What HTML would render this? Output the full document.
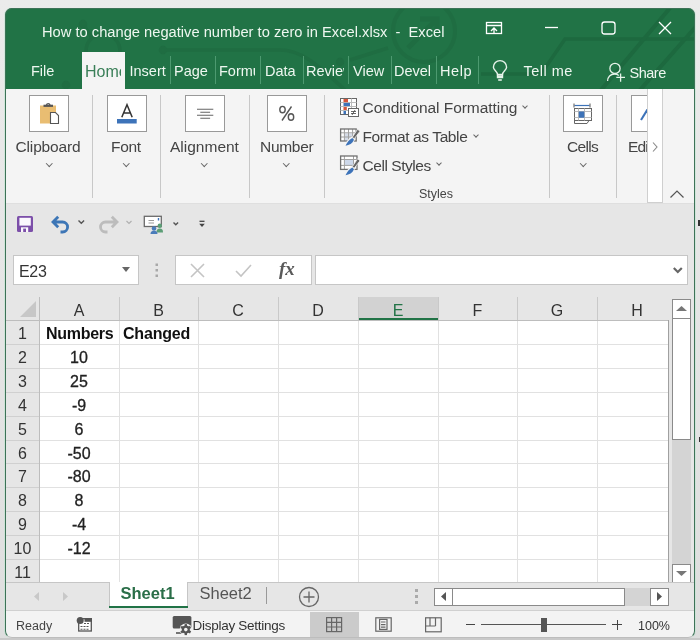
<!DOCTYPE html>
<html><head><meta charset="utf-8">
<style>
*{margin:0;padding:0;box-sizing:border-box}
html,body{width:700px;height:640px;overflow:hidden;background:linear-gradient(#ebebeb,#dedede);font-family:"Liberation Sans",sans-serif}
.a{position:absolute}
#win{will-change:transform;position:absolute;left:0;top:0;width:700px;height:640px;clip-path:inset(8px 5px 2px 5px round 7px);background:#e6e6e6}
#frame{position:absolute;left:5px;top:8px;width:690px;height:630px;border-radius:7px;border:1px solid #3d7257;border-bottom-color:#bdbdbd;box-shadow:-1px 0 0 0 rgba(190,230,208,.55),1px 0 0 0 rgba(190,230,208,.55);z-index:50}
.t{position:absolute;white-space:pre;line-height:1}
.tab{color:#eef7f0;font-size:14.5px}
.sep{position:absolute;width:1px;background:#4d9a70;top:56px;height:28px}
.rsep{position:absolute;width:1px;background:#c8c8c8;top:95px;height:103px}
.box{position:absolute;top:95px;width:40px;height:37px;background:#fff;border:1px solid #999}
.lbl{color:#444;font-size:15.5px;top:139px}
.chev{position:absolute;width:4.5px;height:4.5px;border-right:1px solid #666;border-bottom:1px solid #666;transform:rotate(45deg)}
.colh{position:absolute;top:297px;height:23px;width:80px;color:#333;font-size:16px;text-align:center;line-height:27px}
.hs{position:absolute;top:297px;width:1px;height:23px;background:#c9c9c9}
.rowh{position:absolute;left:6px;width:33px;height:24px;color:#333;font-size:16px;text-align:center;line-height:28px}
.gl{position:absolute;background:#e1e1e1}
.cell{position:absolute;left:39px;width:80px;height:24px;font-size:16px;color:#222;-webkit-text-stroke:0.3px #222;line-height:28px;text-align:center}
</style></head><body>
<div id="win">
  <!-- title + tabs green -->
  <div class="a" style="left:0;top:0;width:700px;height:89px;background:#217346"></div>
  <svg class="a" style="left:0;top:0" width="700" height="89" fill="none" stroke="#1f6d42" stroke-width="3.5">
    <circle cx="103" cy="51" r="17"/>
    <circle cx="83" cy="24" r="2.5"/>
    <path d="M85 27 L92 38"/>
    <circle cx="163" cy="50" r="2.5"/>
    <path d="M166 50 H280 C300 50 315 62 345 90"/>
    <circle cx="340" cy="62" r="2.5"/>
    <circle cx="424" cy="31" r="31" stroke-width="4"/>
    <path d="M408 48 L436 20 M420 19 H437 V36" stroke-width="5"/>
    <path d="M388 48 L350 60"/>
    <path d="M481 74 H541 L565 39 H700" stroke="#1d693f"/>
    <path d="M601 90 L670 8 M640 90 L700 22" stroke-width="4" stroke="#1d693f"/>
    <circle cx="66" cy="85" r="2.5"/>
  </svg>
  <div class="t" style="left:42px;top:25px;font-size:14.7px;color:#eef7f0">How to change negative number to zero in Excel.xlsx  -  Excel</div>
  <!-- window buttons -->
  <svg class="a" style="left:480px;top:15px" width="210" height="30" fill="none" stroke="#fff" stroke-width="1.3">
    <rect x="6.5" y="7.5" width="15" height="11"/>
    <path d="M6.5 10.5 H21.5 M14 18.5 V13 M11 16 L14 13 L17 16"/>
    <path d="M65 12.5 H78"/>
    <rect x="122" y="7" width="13" height="12" rx="2.5"/>
    <path d="M179 7 L191 19 M191 7 L179 19"/>
  </svg>
  <!-- tabs -->
  <div class="t tab" style="left:31px;top:64px">File</div>
  <div class="a" style="left:82px;top:52px;width:43px;height:37px;background:#f4f4f4"></div>
  <div class="a" style="left:82px;top:52px;width:39px;height:37px;overflow:hidden">
    <div class="t" style="left:3px;top:11.5px;font-size:16px;color:#3a7f58">Home</div>
  </div>
  <div class="t tab" style="left:129.5px;top:63.5px">Insert</div>
  <div class="sep" style="left:170px"></div>
  <div class="t tab" style="left:174px;top:64px">Page</div>
  <div class="sep" style="left:215px"></div>
  <div class="a" style="left:219px;top:52px;width:36px;height:37px;overflow:hidden"><div class="t tab" style="left:0px;top:12px">Formulas</div></div>
  <div class="sep" style="left:259.5px"></div>
  <div class="t tab" style="left:265px;top:64px">Data</div>
  <div class="sep" style="left:303px"></div>
  <div class="a" style="left:306px;top:52px;width:38px;height:37px;overflow:hidden"><div class="t tab" style="left:0px;top:12px">Review</div></div>
  <div class="sep" style="left:348px"></div>
  <div class="t tab" style="left:353px;top:64px">View</div>
  <div class="sep" style="left:390.5px"></div>
  <div class="a" style="left:394px;top:52px;width:37px;height:37px;overflow:hidden"><div class="t tab" style="left:0px;top:12px">Developer</div></div>
  <div class="sep" style="left:436px"></div>
  <div class="t tab" style="left:440px;top:64px;letter-spacing:0.6px">Help</div>
  <div class="sep" style="left:478px"></div>
  <svg class="a" style="left:484px;top:56px" width="30" height="30" fill="none" stroke="#e6f3ea" stroke-width="1.4">
    <path d="M13.5 18.5 C13.5 15.5 9.4 14 9.4 11.2 A6.6 6.6 0 0 1 22.6 11.2 C22.6 14 18.5 15.5 18.5 18.5 Z"/>
    <path d="M13.5 18.5 V21.5 H18.5 V18.5 M14 20 H18"/>
    <path d="M14.2 24 H17.8" stroke-width="1.6"/>
  </svg>
  <div class="t tab" style="left:523.5px;top:64px;letter-spacing:0.5px">Tell me</div>
  <svg class="a" style="left:605px;top:62px" width="24" height="22" fill="none" stroke="#e6f3ea" stroke-width="1.3">
    <circle cx="10" cy="6.4" r="5.1"/>
    <path d="M2.6 19 C2.6 15 5.5 12 9.5 12 C11.3 12 12.8 12.5 13.8 13.4"/>
    <path d="M15.6 11.5 V19.8 M11.3 15.3 H20"/>
  </svg>
  <div class="t tab" style="left:629.5px;top:66px;letter-spacing:-0.5px">Share</div>

  <!-- ribbon -->
  <div class="a" style="left:0;top:89px;width:700px;height:114px;background:#f4f4f4"></div>
  <div class="a" style="left:0;top:203px;width:700px;height:1px;background:#dfdfdf"></div>
  <div class="box" style="left:29px"></div>
  <svg class="a" style="left:29px;top:95px" width="40" height="37">
    <path d="M11 10.5 H27 V17 H22 V28.5 H11 Z" fill="#e9bd72"/>
    <path d="M14.5 10.8 H24" stroke="#555" stroke-width="2.2"/>
    <path d="M17.5 10 A1.8 1.8 0 0 1 21 10" fill="none" stroke="#555" stroke-width="1.4"/>
    <path d="M21.5 17.5 H26.5 L29.5 20.5 V28.5 H21.5 Z" fill="#fff" stroke="#555" stroke-width="1.1"/>
  </svg>
  <div class="t lbl" style="left:15.5px;letter-spacing:-0.15px">Clipboard</div>
  <div class="chev" style="left:47px;top:161px"></div>
  <div class="rsep" style="left:92px"></div>
  <div class="box" style="left:107px"></div>
  <svg class="a" style="left:107px;top:95px" width="40" height="37">
    <path d="M14.8 22.3 L20 9.8 L25.2 22.3 M16.6 18 H23.4" fill="none" stroke="#333" stroke-width="1.5"/>
    <rect x="10" y="24" width="19.7" height="4.5" fill="#3d73b9"/>
  </svg>
  <div class="t lbl" style="left:111px;letter-spacing:-0.3px">Font</div>
  <div class="chev" style="left:124px;top:161px"></div>
  <div class="rsep" style="left:160px"></div>
  <div class="box" style="left:185px"></div>
  <svg class="a" style="left:185px;top:95px" width="40" height="37" stroke="#666" stroke-width="1.1">
    <path d="M12 14.2 H28.3 M15.3 17.2 H25.1 M12 20.2 H28.3 M15.3 23.2 H25.1"/>
  </svg>
  <div class="t lbl" style="left:170px">Alignment</div>
  <div class="chev" style="left:202px;top:161px"></div>
  <div class="rsep" style="left:249px"></div>
  <div class="box" style="left:267px"></div>
  <svg class="a" style="left:267px;top:95px" width="40" height="37" fill="none" stroke="#555" stroke-width="1.4">
    <ellipse cx="15.5" cy="14.6" rx="2.7" ry="3.2"/>
    <ellipse cx="24" cy="22" rx="2.7" ry="3.2"/>
    <path d="M24.5 11.5 L15 25.5"/>
  </svg>
  <div class="t lbl" style="left:260px;letter-spacing:-0.3px">Number</div>
  <div class="chev" style="left:284px;top:161px"></div>
  <div class="rsep" style="left:324px"></div>
  <!-- styles -->
  <svg class="a" style="left:335px;top:94px" width="30" height="26">
    <rect x="5.5" y="4.5" width="16" height="16" fill="#fff" stroke="#666"/>
    <path d="M5.5 8.5 H21.5 M5.5 12.5 H21.5 M5.5 16.5 H21.5 M16.5 4.5 V20.5" stroke="#bbb" fill="none"/>
    <rect x="8.5" y="5" width="4.5" height="3.2" fill="#d5553b"/>
    <rect x="8.5" y="9" width="6.5" height="3" fill="#3d73b9"/>
    <rect x="8.5" y="13" width="3.3" height="3" fill="#d5553b"/>
    <rect x="8.5" y="17" width="2.5" height="3.2" fill="#3d73b9"/>
    <rect x="13.5" y="14.5" width="10" height="8" fill="#fff" stroke="#666"/>
    <path d="M16 17.5 H21 M16 19.5 H21 M20 16 L17 21" stroke="#444" stroke-width=".8"/>
  </svg>
  <div class="t lbl" style="left:362.5px;top:99.5px;font-size:15.5px;letter-spacing:-0.05px">Conditional Formatting</div>
  <div class="chev" style="left:523px;top:104px;width:4px;height:4px"></div>
  <svg class="a" style="left:335px;top:124px" width="28" height="24" viewBox="335 124 28 24">
    <rect x="340.6" y="129" width="15.6" height="12" fill="#fff"/>
    <rect x="344.9" y="133.3" width="7.4" height="7.4" fill="#d5dce8"/>
    <path d="M344.4 129 V141 M348.5 129 V141 M352.6 129 V141 M340.6 132.8 H356.2 M340.6 137 H356.2" stroke="#a0a0a0" stroke-width="1"/>
    <rect x="340.6" y="129" width="15.6" height="12" fill="none" stroke="#707070" stroke-width="1.3"/>
    <path d="M352.3 137.2 L354.2 139.2 C352.8 143.3 349.5 145.4 345.3 145.8 C346.8 142 349 138.8 352.3 137.2 Z" fill="#f4f4f4" stroke="#f4f4f4" stroke-width="1.5"/>
    <path d="M357.6 129.2 L360 131.3 L354.2 138.8 L352.3 137.2 Z" fill="#666" stroke="#f4f4f4" stroke-width=".8"/>
    <path d="M352.3 138 L354 139.8 C352.5 143.5 349.3 145.3 345.5 145.8 C347 142.5 349 139.5 352.3 138 Z" fill="#3d73b9"/>
  </svg>
  <div class="t lbl" style="left:362.5px;top:128.5px;font-size:15.5px;letter-spacing:-0.4px">Format as Table</div>
  <div class="chev" style="left:474px;top:132.5px;width:4px;height:4px"></div>
  <svg class="a" style="left:335px;top:153px" width="28" height="24" viewBox="335 153 28 24">
    <rect x="340.6" y="156" width="16.4" height="13.4" fill="#fff"/>
    <rect x="344.9" y="160" width="8.3" height="5.2" fill="#cdd8ea"/>
    <path d="M344.4 156 V169.4 M353.5 156 V169.4 M340.6 159.5 H357 M340.6 165.4 H357" stroke="#a0a0a0" stroke-width="1"/>
    <rect x="340.6" y="156" width="16.4" height="13.4" fill="none" stroke="#707070" stroke-width="1.3"/>
    <path d="M352.3 166.7 L354.2 168.7 C352.8 172.8 349.5 174.9 345.3 175.3 C346.8 171.5 349 168.3 352.3 166.7 Z" fill="#f4f4f4" stroke="#f4f4f4" stroke-width="1.5"/>
    <path d="M357.6 158.7 L360 160.8 L354.2 168.3 L352.3 166.7 Z" fill="#666" stroke="#f4f4f4" stroke-width=".8"/>
    <path d="M352.3 167.5 L354 169.3 C352.5 173 349.3 174.8 345.5 175.3 C347 172 349 169 352.3 167.5 Z" fill="#3d73b9"/>
  </svg>
  <div class="t lbl" style="left:362.5px;top:158px;font-size:15.5px;letter-spacing:-0.45px">Cell Styles</div>
  <div class="chev" style="left:437px;top:161px;width:4px;height:4px"></div>
  <div class="t" style="left:419px;top:188px;font-size:12.5px;color:#444">Styles</div>
  <div class="rsep" style="left:549px"></div>
  <div class="box" style="left:563px"></div>
  <svg class="a" style="left:563px;top:95px" width="40" height="37">
    <path d="M11.5 10.5 H26.5" stroke="#3d73b9" stroke-width="1.2"/>
    <path d="M11 8.5 V12.5 M27 8.5 V12.5" stroke="#555" stroke-width="1"/>
    <rect x="11.5" y="13.5" width="17" height="12" fill="#fff" stroke="#666"/>
    <path d="M11.5 16.5 H28.5 M11.5 22.5 H28.5 M15.5 13.5 V25.5 M21.5 13.5 V25.5" stroke="#bbb"/>
    <rect x="15.8" y="16.5" width="5.5" height="6.2" fill="#3d73b9"/>
    <path d="M11.5 25.5 V28.5 H24 L26 25.5" fill="none" stroke="#666"/>
  </svg>
  <div class="t lbl" style="left:567px;letter-spacing:-0.7px">Cells</div>
  <div class="chev" style="left:581px;top:161px"></div>
  <div class="rsep" style="left:616px"></div>
  <div class="a" style="left:600px;top:89px;width:47px;height:114px;overflow:hidden">
    <div class="box" style="left:31px;top:6px"></div>
    <svg class="a" style="left:38px;top:15px" width="12" height="20"><path d="M11 3 L3 16" stroke="#3d73b9" stroke-width="2"/></svg>
    <div class="t lbl" style="left:28px;top:50px;letter-spacing:-0.8px">Editing</div>
  </div>
  <div class="a" style="left:647px;top:89px;width:16px;height:114px;background:#fff;border:1px solid #cfcfcf;border-top:none"></div>
  <svg class="a" style="left:651px;top:141px" width="8" height="12" fill="none" stroke="#888" stroke-width="1.1"><path d="M2 1.5 L6 6 L2 10.5"/></svg>
  <svg class="a" style="left:669px;top:189px" width="16" height="10" fill="none" stroke="#555" stroke-width="1.2"><path d="M1.5 8.5 L8 2 L14.5 8.5"/></svg>

  <!-- QAT -->
  <svg class="a" style="left:17px;top:216px" width="17" height="17">
    <rect x="0" y="0" width="16" height="16" rx="1.5" fill="#7c4fa9"/>
    <rect x="2.4" y="1.8" width="11.4" height="7.8" fill="#fbf8fd"/>
    <rect x="4" y="11.3" width="7.2" height="4.7" fill="#fbf8fd"/>
    <rect x="6.2" y="12.6" width="2.8" height="3.4" fill="#7c4fa9"/>
  </svg>
  <svg class="a" style="left:45px;top:210px" width="80" height="30" fill="none" stroke-width="2.8">
    <path d="M13.2 6.8 L8 12 L13.2 17.2 M8.5 12 H17.6 A5 5 0 0 1 17.6 22 H15.5" stroke="#3d76b6"/>
    <path d="M66.8 6.8 L72 12 L66.8 17.2 M71.5 12 H60.5 A5 5 0 0 0 60.5 22 H62.5" stroke="#bcbcbc"/>
  </svg>
  <svg class="a" style="left:75px;top:218px" width="14" height="10"><path d="M3.5 2.5 L6.3 5.3 L9.1 2.5" fill="none" stroke="#555" stroke-width="1.4"/></svg>
  <svg class="a" style="left:122px;top:218px" width="14" height="10"><path d="M4.5 3 L7 5.5 L9.5 3" fill="none" stroke="#b0b0b0" stroke-width="1.2"/></svg>
  <svg class="a" style="left:138px;top:210px" width="72" height="28">
    <rect x="6.3" y="6.3" width="17" height="10.2" fill="#fff" stroke="#6a6a6a" stroke-width="1.3"/>
    <path d="M10.5 10.5 H16 M10.5 13 H16" stroke="#9a9a9a" stroke-width="1"/>
    <path d="M20.5 8 V10.5" stroke="#3d73b9" stroke-width="1.4"/>
    <circle cx="21.8" cy="15.8" r="2.2" fill="#5c9e76"/>
    <path d="M18.5 22.5 C18.5 19.5 19.5 18.5 21.8 18.5 C24 18.5 25 19.5 25 22.5 Z" fill="#5c9e76"/>
    <circle cx="16" cy="18.5" r="2.3" fill="#4a7cba"/>
    <path d="M12.5 24 C12.5 21.5 13.8 20.8 16 20.8 C18.2 20.8 19.5 21.5 19.5 24 Z" fill="#4a7cba"/>
    <path d="M35.5 12.5 L37.8 14.8 L40.1 12.5" fill="none" stroke="#555" stroke-width="1.4"/>
    <path d="M61.5 11.3 H66.5" stroke="#444" stroke-width="1.3"/>
    <path d="M61.2 13.8 H66.8 L64 17 Z" fill="#444"/>
  </svg>

  <!-- formula bar -->
  <div class="a" style="left:13px;top:255px;width:126px;height:30px;background:#fff;border:1px solid #c6c6c6"></div>
  <div class="t" style="left:19px;top:264px;font-size:16px;letter-spacing:-0.3px;color:#333">E23</div>
  <svg class="a" style="left:122px;top:267px" width="9" height="6"><path d="M0 0 H8 L4 5 Z" fill="#666"/></svg>
  <svg class="a" style="left:155px;top:262px" width="4" height="16" fill="#a8a8a8"><rect x="0.5" y="1.5" width="2.5" height="2.5"/><rect x="0.5" y="7" width="2.5" height="2.5"/><rect x="0.5" y="12.5" width="2.5" height="2.5"/></svg>
  <div class="a" style="left:175px;top:255px;width:137px;height:30px;background:#fff;border:1px solid #c6c6c6"></div>
  <svg class="a" style="left:189px;top:262px" width="110" height="18" fill="none" stroke="#c4c4c4" stroke-width="1.6">
    <path d="M2 2 L15 15 M15 2 L2 15"/>
    <path d="M47 9 L52 14 L62 3"/>
  </svg>
  <div class="t" style="left:279px;top:258.5px;font-family:'Liberation Serif',serif;font-style:italic;font-weight:bold;font-size:19px;letter-spacing:0px;color:#5a5a5a">fx</div>
  <div class="a" style="left:315px;top:255px;width:373px;height:30px;background:#fff;border:1px solid #c6c6c6"></div>
  <svg class="a" style="left:671px;top:265px" width="14" height="10" fill="none" stroke="#666" stroke-width="2.2"><path d="M2.8 3 L6.8 7 L10.8 3"/></svg>

  <!-- grid -->
  <div class="a" style="left:39px;top:320px;width:630px;height:262px;background:#fff"></div>
  <svg class="a" style="left:20px;top:301px" width="17" height="17"><path d="M16 0 V16 H0 Z" fill="#c7c7c7"/></svg>
  <div class="a" style="left:6px;top:320px;width:663px;height:1px;background:#bdbdbd"></div>
  <div class="a" style="left:39px;top:297px;width:1px;height:285px;background:#bdbdbd"></div>
  <div class="a" style="left:668px;top:320px;width:1px;height:262px;background:#a0a0a0"></div>
  <div class="colh" style="left:39px;width:80px;color:#333">A</div>
<div class="colh" style="left:119px;width:79px;color:#333">B</div>
<div class="hs" style="left:119px"></div>
<div class="gl" style="left:119px;top:321px;width:1px;height:261px"></div>
<div class="colh" style="left:198px;width:80px;color:#333">C</div>
<div class="hs" style="left:198px"></div>
<div class="gl" style="left:198px;top:321px;width:1px;height:261px"></div>
<div class="colh" style="left:278px;width:80px;color:#333">D</div>
<div class="hs" style="left:278px"></div>
<div class="gl" style="left:278px;top:321px;width:1px;height:261px"></div>
<div class="a" style="left:358px;top:297px;width:80px;height:23px;background:#d2d2d2"></div>
<div class="a" style="left:358px;top:318px;width:80px;height:2px;background:#217346"></div>
<div class="colh" style="left:358px;width:80px;color:#217346">E</div>
<div class="hs" style="left:358px"></div>
<div class="gl" style="left:358px;top:321px;width:1px;height:261px"></div>
<div class="colh" style="left:438px;width:79px;color:#333">F</div>
<div class="hs" style="left:438px"></div>
<div class="gl" style="left:438px;top:321px;width:1px;height:261px"></div>
<div class="colh" style="left:517px;width:80px;color:#333">G</div>
<div class="hs" style="left:517px"></div>
<div class="gl" style="left:517px;top:321px;width:1px;height:261px"></div>
<div class="colh" style="left:597px;width:80px;color:#333">H</div>
<div class="hs" style="left:597px"></div>
<div class="gl" style="left:597px;top:321px;width:1px;height:261px"></div>
<div class="rowh" style="top:320px">1</div>
<div class="gl" style="left:40px;top:344px;width:628px;height:1px"></div>
<div class="rowh" style="top:344px">2</div>
<div class="a" style="left:6px;top:344px;width:33px;height:1px;background:#d0d0d0"></div>
<div class="gl" style="left:40px;top:368px;width:628px;height:1px"></div>
<div class="cell" style="top:344px;left:39px;width:80px">10</div>
<div class="rowh" style="top:368px">3</div>
<div class="a" style="left:6px;top:368px;width:33px;height:1px;background:#d0d0d0"></div>
<div class="gl" style="left:40px;top:392px;width:628px;height:1px"></div>
<div class="cell" style="top:368px;left:39px;width:80px">25</div>
<div class="rowh" style="top:392px">4</div>
<div class="a" style="left:6px;top:392px;width:33px;height:1px;background:#d0d0d0"></div>
<div class="gl" style="left:40px;top:416px;width:628px;height:1px"></div>
<div class="cell" style="top:392px;left:39px;width:80px">-9</div>
<div class="rowh" style="top:416px">5</div>
<div class="a" style="left:6px;top:416px;width:33px;height:1px;background:#d0d0d0"></div>
<div class="gl" style="left:40px;top:440px;width:628px;height:1px"></div>
<div class="cell" style="top:416px;left:39px;width:80px">6</div>
<div class="rowh" style="top:440px">6</div>
<div class="a" style="left:6px;top:440px;width:33px;height:1px;background:#d0d0d0"></div>
<div class="gl" style="left:40px;top:463px;width:628px;height:1px"></div>
<div class="cell" style="top:440px;left:39px;width:80px">-50</div>
<div class="rowh" style="top:463px">7</div>
<div class="a" style="left:6px;top:463px;width:33px;height:1px;background:#d0d0d0"></div>
<div class="gl" style="left:40px;top:487px;width:628px;height:1px"></div>
<div class="cell" style="top:463px;left:39px;width:80px">-80</div>
<div class="rowh" style="top:487px">8</div>
<div class="a" style="left:6px;top:487px;width:33px;height:1px;background:#d0d0d0"></div>
<div class="gl" style="left:40px;top:511px;width:628px;height:1px"></div>
<div class="cell" style="top:487px;left:39px;width:80px">8</div>
<div class="rowh" style="top:511px">9</div>
<div class="a" style="left:6px;top:511px;width:33px;height:1px;background:#d0d0d0"></div>
<div class="gl" style="left:40px;top:535px;width:628px;height:1px"></div>
<div class="cell" style="top:511px;left:39px;width:80px">-4</div>
<div class="rowh" style="top:535px">10</div>
<div class="a" style="left:6px;top:535px;width:33px;height:1px;background:#d0d0d0"></div>
<div class="gl" style="left:40px;top:559px;width:628px;height:1px"></div>
<div class="cell" style="top:535px;left:39px;width:80px">-12</div>
<div class="rowh" style="top:559px">11</div>
<div class="a" style="left:6px;top:559px;width:33px;height:1px;background:#d0d0d0"></div>
<div class="gl" style="left:40px;top:583px;width:628px;height:1px"></div>
<div class="t" style="left:46px;top:325.5px;font-size:16px;letter-spacing:-0.3px;font-weight:bold;color:#111">Numbers</div>
<div class="t" style="left:123px;top:325.5px;font-size:16px;letter-spacing:-0.2px;font-weight:bold;color:#111">Changed</div>
  <!-- vertical scrollbar -->
  <div class="a" style="left:672px;top:299px;width:19px;height:284px;background:#d4d4d4"></div>
  <div class="a" style="left:672px;top:299px;width:19px;height:20px;background:#fff;border:1px solid #8a8a8a"></div>
  <svg class="a" style="left:676px;top:304.5px" width="12" height="8"><path d="M0 6 H11 L5.5 1 Z" fill="#777"/></svg>
  <div class="a" style="left:672px;top:318px;width:19px;height:122px;background:#fff;border:1px solid #8a8a8a"></div>
  <div class="a" style="left:672px;top:564px;width:19px;height:19px;background:#fff;border:1px solid #8a8a8a"></div>
  <svg class="a" style="left:676px;top:570px" width="12" height="8"><path d="M0 1 H11 L5.5 6 Z" fill="#777"/></svg>

  <!-- sheet tabs -->
  <div class="a" style="left:0;top:582px;width:700px;height:29px;background:#e6e6e6;border-top:1px solid #c6c6c6"></div>
  <svg class="a" style="left:33px;top:592px" width="40" height="10" fill="#c8c8c8"><path d="M6 0 V9 L1 4.5 Z M30 0 V9 L35 4.5 Z"/></svg>
  <div class="a" style="left:109px;top:582px;width:79px;height:26px;background:#fff;border-left:1px solid #c6c6c6;border-right:1px solid #c6c6c6"></div>
  <div class="a" style="left:109px;top:606px;width:79px;height:2px;background:#217346"></div>
  <div class="t" style="left:120.5px;top:585px;font-size:16.5px;font-weight:bold;color:#2a6e48">Sheet1</div>
  <div class="t" style="left:199.5px;top:585px;font-size:16.5px;color:#555">Sheet2</div>
  <div class="a" style="left:266px;top:587px;width:1px;height:17px;background:#999"></div>
  <svg class="a" style="left:298px;top:586px" width="22" height="22" fill="none" stroke="#666" stroke-width="1.3"><circle cx="11" cy="11" r="9.5"/><path d="M11 5.5 V16.5 M5.5 11 H16.5"/></svg>
  <svg class="a" style="left:415px;top:588px" width="4" height="18" fill="#aaa"><rect x="0" y="1" width="3" height="3"/><rect x="0" y="7" width="3" height="3"/><rect x="0" y="13" width="3" height="3"/></svg>
  <div class="a" style="left:434px;top:588px;width:235px;height:18px;background:#d4d4d4"></div>
  <div class="a" style="left:434px;top:588px;width:19px;height:18px;background:#fff;border:1px solid #8a8a8a"></div>
  <svg class="a" style="left:440px;top:592px" width="8" height="10"><path d="M6 0 V9 L1 4.5 Z" fill="#555"/></svg>
  <div class="a" style="left:452px;top:588px;width:173px;height:18px;background:#fff;border:1px solid #8a8a8a"></div>
  <div class="a" style="left:650px;top:588px;width:19px;height:18px;background:#fff;border:1px solid #8a8a8a"></div>
  <svg class="a" style="left:656px;top:592px" width="8" height="10"><path d="M1 0 V9 L6 4.5 Z" fill="#555"/></svg>

  <!-- status bar -->
  <div class="a" style="left:0;top:610px;width:700px;height:30px;background:#f3f3f3;border-top:1px solid #d0d0d0"></div>
  <div class="t" style="left:16px;top:620px;font-size:12.5px;color:#444">Ready</div>
  <svg class="a" style="left:70px;top:612px" width="30" height="24">
    <rect x="8.7" y="6.7" width="12.6" height="12.3" fill="#fff" stroke="#555" stroke-width="1.3"/>
    <rect x="14.5" y="6" width="7.5" height="3.8" fill="#555"/>
    <circle cx="10.2" cy="8.4" r="3.5" fill="#555"/>
    <path d="M14 11.5 H19.5 M10.5 14.5 H19.5 M10.5 17.2 H19.5" stroke="#555" stroke-width="1.1" stroke-dasharray="2 1"/>
  </svg>
  <svg class="a" style="left:168px;top:612px" width="30" height="24">
    <rect x="4.7" y="4.1" width="18.7" height="12.4" rx="1.5" fill="#555"/>
    <path d="M8 21 H13" stroke="#555" stroke-width="1.6"/>
    <circle cx="17.8" cy="17.6" r="6.2" fill="#f3f3f3"/>
    <g transform="translate(17.8 17.6)" fill="#555">
      <circle r="4"/>
      <rect x="-1.2" y="-5.5" width="2.4" height="11"/>
      <rect x="-1.2" y="-5.5" width="2.4" height="11" transform="rotate(60)"/>
      <rect x="-1.2" y="-5.5" width="2.4" height="11" transform="rotate(120)"/>
    </g>
    <circle cx="17.8" cy="17.6" r="1.8" fill="#f3f3f3"/>
  </svg>
  <div class="t" style="left:192.5px;top:618.5px;font-size:13.5px;letter-spacing:-0.27px;color:#333">Display Settings</div>
  <div class="a" style="left:309.5px;top:612px;width:49px;height:25px;background:#cbcbcb"></div>
  <svg class="a" style="left:326px;top:617px" width="17" height="16" fill="none" stroke="#666" stroke-width="1.2"><rect x="0.6" y="0.6" width="15" height="14"/><path d="M0.5 5.3 H15.5 M0.5 10 H15.5 M5.6 0.5 V14.5 M10.6 0.5 V14.5"/></svg>
  <svg class="a" style="left:370px;top:612px" width="30" height="24" fill="none" stroke="#666" stroke-width="1.2"><rect x="5.8" y="5.8" width="15.4" height="13.4"/><rect x="9.6" y="7.4" width="7.4" height="10"/><path d="M11 10 H15.5 M11 12.7 H15.5 M11 15.2 H15.5"/></svg>
  <svg class="a" style="left:420px;top:612px" width="30" height="24" fill="none" stroke="#666" stroke-width="1.2"><rect x="5.6" y="5.8" width="15.6" height="14"/><path d="M10 5.8 V14 M15.5 5.8 V14 M5.6 14 H15.5"/></svg>
  <div class="a" style="left:466px;top:624px;width:9px;height:1px;background:#444"></div>
  <div class="a" style="left:481px;top:624px;width:125px;height:1px;background:#555"></div>
  <div class="a" style="left:541px;top:618px;width:6px;height:14px;background:#555"></div>
  <div class="a" style="left:612px;top:624px;width:10px;height:1px;background:#444"></div>
  <div class="a" style="left:616.5px;top:619.5px;width:1px;height:10px;background:#444"></div>
  <div class="t" style="left:638px;top:620px;font-size:12.5px;color:#333">100%</div>
</div>
<div id="frame"></div>
<div class="a" style="left:698px;top:220px;width:2px;height:6px;background:#333;z-index:60"></div>
<div class="a" style="left:698.5px;top:437px;width:1.5px;height:5px;background:#333;z-index:60"></div>
<div class="a" style="left:0;top:638px;width:700px;height:2px;background:#c9c9c9;z-index:60"></div>
</body></html>
